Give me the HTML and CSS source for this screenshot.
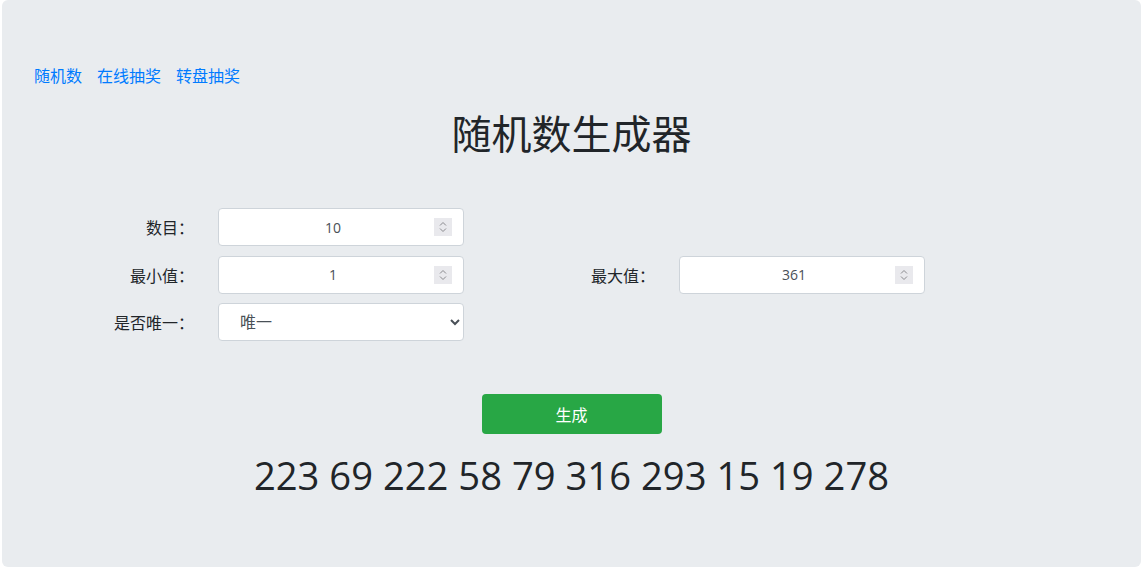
FILE: index.html
```html
<!DOCTYPE html>
<html lang="zh-CN">
<head>
    <meta charset="UTF-8">
    <meta name="viewport" content="width=device-width, initial-scale=1.0">
    <title>随机数生成器</title>
    <link rel="stylesheet" href="styles.css">
</head>
<body>

<div class="jumbotron">
    <nav class="links">
        <a href="#">随机数</a>
        <a href="#">在线抽奖</a>
        <a href="#">转盘抽奖</a>
    </nav>

    <h1 class="title">随机数生成器</h1>

    <form class="gen-form" id="genForm">
        <label for="count">数目：</label>
        <div class="num-field">
            <input type="number" id="count" class="form-control" value="10">
            <span class="spin"><svg width="8" height="12" viewBox="0 0 8 12"><path d="M1 4.5 4 1.5 7 4.5M1 7.5 4 10.5 7 7.5" fill="none" stroke="#8a8a8e" stroke-width="1"/></svg></span>
        </div>
        <span></span>
        <span></span>

        <label for="min">最小值：</label>
        <div class="num-field">
            <input type="number" id="min" class="form-control" value="1">
            <span class="spin"><svg width="8" height="12" viewBox="0 0 8 12"><path d="M1 4.5 4 1.5 7 4.5M1 7.5 4 10.5 7 7.5" fill="none" stroke="#8a8a8e" stroke-width="1"/></svg></span>
        </div>
        <label for="max">最大值：</label>
        <div class="num-field">
            <input type="number" id="max" class="form-control" value="361">
            <span class="spin"><svg width="8" height="12" viewBox="0 0 8 12"><path d="M1 4.5 4 1.5 7 4.5M1 7.5 4 10.5 7 7.5" fill="none" stroke="#8a8a8e" stroke-width="1"/></svg></span>
        </div>

        <label for="unique">是否唯一：</label>
        <select id="unique" class="form-select">
            <option value="1">唯一</option>
            <option value="0">可重复</option>
        </select>
    </form>

    <div class="actions">
        <button type="button" class="btn-gen" id="genBtn">生成</button>
    </div>

    <!-- result -->
    <div class="result" id="result">223 69 222 58 79 316 293 15 19 278</div>
</div>

<script>
    document.getElementById('genBtn').addEventListener('click', function() {
        const count = parseInt(document.getElementById('count').value);
        const min = parseInt(document.getElementById('min').value);
        const max = parseInt(document.getElementById('max').value);
        const unique = document.getElementById('unique').value === '1';
        const nums = [];

        while (nums.length < count) {
            const n = Math.floor(Math.random() * (max - min + 1)) + min;
            if (unique && nums.includes(n)) {
                if (max - min + 1 <= nums.length) break;
                continue;
            }
            nums.push(n);
        }

        document.getElementById('result').textContent = nums.join(' ');
    });
</script>

</body>
</html>
```

FILE: styles.css
```css
/* Page */
body {
    font-family: 'Open Sans', 'Noto Sans CJK SC', sans-serif;
    color: #212529;
    background-color: #ffffff;
    margin: 0;
    padding: 0 7px 0 2px;
}

.jumbotron {
    background-color: #e9ecef;
    border-radius: 6px;
    padding: 64px 32px 62px;
}

/* Top links */
.links {
    display: flex;
    gap: 15px;
    font-size: 16px;
    line-height: 24px;
}

.links a {
    color: #007bff;
    text-decoration: none;
}

.title {
    text-align: center;
    font-size: 40px;
    font-weight: 400;
    line-height: 48px;
    margin: 22px 0 50px;
}

/* Form grid */
.gen-form {
    display: grid;
    grid-template-columns: 160px 246px 167px 246px;
    column-gap: 24px;
    row-gap: 9.5px;
    align-items: center;
}

.gen-form label {
    text-align: right;
    font-size: 16px;
    color: #212529;
}

.num-field {
    position: relative;
}

.form-control, .form-select {
    box-sizing: border-box;
    height: 38px;
    width: 100%;
    border: 1px solid #ced4da;
    border-radius: 4px;
    background-color: #fff;
    font-family: inherit;
    color: #495057;
    margin: 0;
}

.form-control {
    padding: 6px 28px 6px 12px;
    font-size: 14px;
    text-align: center;
    display: block;
}

.form-control::-webkit-inner-spin-button,
.form-control::-webkit-outer-spin-button {
    -webkit-appearance: none;
    margin: 0;
}

/* spinner box drawn over the input */
.spin {
    position: absolute;
    right: 12px;
    top: 10px;
    width: 18px;
    height: 18px;
    background-color: #e9e9ed;
    display: flex;
    align-items: center;
    justify-content: center;
    pointer-events: none;
}

.form-select {
    padding: 6px 10px 6px 17px;
    font-size: 16px;
}

/* Button */
.actions {
    display: flex;
    justify-content: center;
    margin-top: 53px;
}

.btn-gen {
    width: 180px;
    height: 40px;
    background-color: #28a745;
    color: #fff;
    border: none;
    border-radius: 4px;
    font-family: inherit;
    font-size: 16px;
    cursor: pointer;
}

.result {
    text-align: center;
    font-size: 38.2px;
    line-height: 60px;
    margin-top: 11px;
}
```
